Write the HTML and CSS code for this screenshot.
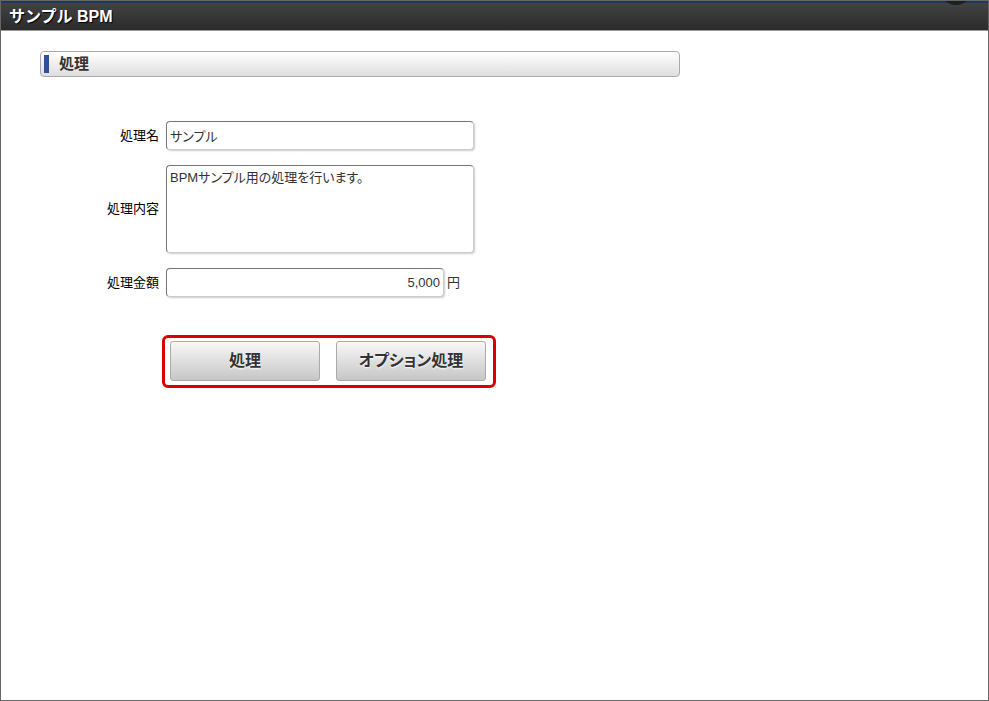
FILE: index.html
```html
<!DOCTYPE html>
<html lang="ja">
<head>
  <meta charset="UTF-8">
  <title>サンプルBPM</title>
  <link rel="stylesheet" href="styles.css">
</head>
<body>
  <header class="header">
    <h1>サンプル BPM</h1>
    <span class="header-tab"></span>
  </header>
  <main class="content">
    <h2 class="section-title">処理</h2>
    <form class="form">
      <label for="name">処理名</label>
      <div class="field">
        <input type="text" id="name" value="サンプル">
      </div>
      <label for="detail">処理内容</label>
      <div class="field">
        <textarea id="detail">BPMサンプル用の処理を行います。</textarea>
      </div>
      <label for="amount">処理金額</label>
      <div class="field">
        <input type="text" id="amount" class="amount" value="5,000">
        <span class="unit">円</span>
      </div>
      <div class="buttons">
        <button type="button">処理</button>
        <button type="button">オプション処理</button>
      </div>
    </form>
  </main>
</body>
</html>
```

FILE: styles.css
```css
* {
  box-sizing: border-box;
  margin: 0;
  padding: 0;
  font-family: "Liberation Sans", "Noto Sans CJK JP", sans-serif;
}
body {
  min-height: 100vh;
  border: 1px solid #666;
  background: #fff;
  color: #000;
  font-size: 13px;
  line-height: 18px;
  font-feature-settings: "palt";
}
.header {
  position: relative;
  overflow: hidden;
  height: 30px;
  padding: 2px 8px 0;
  border-bottom: 1px solid #999;
  background: linear-gradient(#1f3763, #1f3763) top / 100% 2px no-repeat, linear-gradient(#444, #2b2b2b);
}
.header h1 {
  color: #fff;
  font-size: 16px;
  line-height: 27px;
  font-feature-settings: normal;
  text-shadow: 1px 1px 1px #000;
}
.header-tab {
  position: absolute;
  top: -28px;
  right: 16px;
  width: 32px;
  height: 32px;
  border-radius: 50%;
  background: #1d1f20;
}
.content {
  padding: 20px 39px;
}
.section-title {
  display: flex;
  align-items: center;
  max-width: 640px;
  height: 26px;
  padding-left: 3px;
  border: 1px solid #aaa;
  border-radius: 4px;
  background: linear-gradient(#fff, #dedede);
  color: #333;
  font-size: 15px;
}
.section-title::before {
  content: "";
  width: 5px;
  height: 18px;
  margin-right: 10px;
  background: #2f5195;
}
.form {
  display: grid;
  grid-template-columns: 119px 1fr;
  gap: 15px 7px;
  align-items: center;
  margin-top: 44px;
}
.form label {
  text-align: right;
}
.field {
  display: flex;
  align-items: center;
  gap: 3px;
  color: #333;
}
input,
textarea {
  width: 308px;
  height: 29px;
  padding: 3px;
  border: 1px solid;
  border-color: #777 #ccc #ccc #777;
  border-radius: 4px;
  background: #fff;
  box-shadow: 1px 1px 2px #ccc;
  color: #333;
  font-size: 13px;
  line-height: 18px;
  font-feature-settings: inherit;
}
textarea {
  height: 88px;
  resize: none;
}
.amount {
  width: 278px;
  text-align: right;
}
.buttons {
  display: flex;
  grid-column: 2;
  justify-self: start;
  gap: 16px;
  margin: 23px 0 0 -4px;
  padding: 3px 7px 4px 5px;
  border: 3px solid #d90000;
  border-radius: 6px;
}
button {
  width: 150px;
  height: 40px;
  padding-bottom: 4px;
  border: 1px solid #aaa;
  border-radius: 3px;
  background: linear-gradient(#f8f8f8, #c6c6c6);
  color: #333;
  font-size: 16px;
  font-weight: bold;
  font-feature-settings: inherit;
  text-shadow: 0 1px 2px #fff;
  cursor: pointer;
}
```
